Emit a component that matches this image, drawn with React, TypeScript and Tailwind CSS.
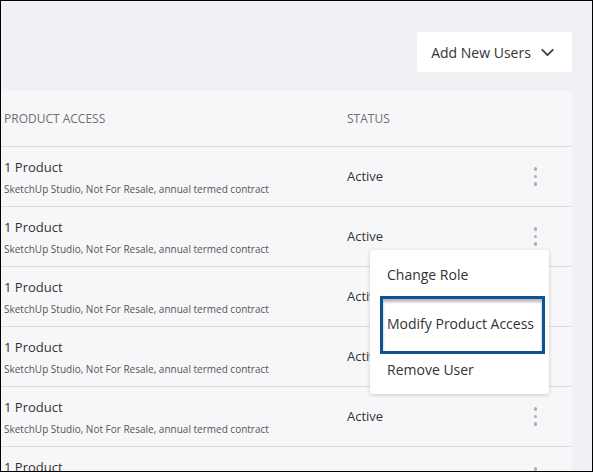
import { ChevronDown } from "lucide-react";

const rows = Array.from({ length: 6 }, () => ({
  product: "1 Product",
  detail: "SketchUp Studio, Not For Resale, annual termed contract",
  status: "Active",
}));

const Kebab = () => (
  <div className="flex flex-col items-center gap-[4px]">
    <span className="w-[3.5px] h-[3.5px] rounded-full bg-[#acacb2]" />
    <span className="w-[3.5px] h-[3.5px] rounded-full bg-[#acacb2]" />
    <span className="w-[3.5px] h-[3.5px] rounded-full bg-[#acacb2]" />
  </div>
);

export default function App() {
  return (
    <div
      className="w-[593px] h-[472px] border border-black bg-[#f1f0f5] overflow-hidden text-[#333]"
      style={{ fontFamily: '"Open Sans", "Noto Sans", sans-serif' }}
    >
      {/* toolbar */}
      <div className="flex justify-end pt-[31px] pr-[20px]">
        <button className="flex items-center gap-[6px] h-[40px] w-[155px] justify-center bg-white rounded-[3px] text-[14px] text-[#333]">
          Add New Users
          <ChevronDown size={21} strokeWidth={2.2} className="text-[#444]" />
        </button>
      </div>

      {/* table */}
      <div className="mt-[19px] mr-[20px] bg-[#f7f7f9]">
        <div className="flex items-center h-[55px] text-[12px] text-[#707070] uppercase">
          <div className="w-[346px] pl-[3px]">Product Access</div>
          <div>Status</div>
        </div>

        {rows.map((r, i) => (
          <div key={i} className="relative flex items-center h-[60px] border-t border-[#dcdcdf]">
            <div className="w-[346px] pl-[3px] flex flex-col">
              <span className="text-[13px] leading-[18px]">{r.product}</span>
              <span className="text-[10px] leading-[14px] mt-[6px] text-[#555]">{r.detail}</span>
            </div>
            <div className="flex-1 text-[13px]">{r.status}</div>
            <div className="w-[72px] flex justify-center pr-[1px]">
              <Kebab />
            </div>

            {i === 1 && (
              <div className="absolute z-10 top-[43px] right-[23px] w-[179px] bg-white rounded-[3px] shadow-[0_1px_4px_rgba(0,0,0,0.18)] pt-[6px] pb-[10px] text-[14px] text-[#333]">
                <div className="px-[17px] h-[36px] flex items-center">Change Role</div>
                <div className="ml-[10px] mr-[4px] mt-[4px] h-[58px] flex items-center pl-[4px] pb-[4px] border-[3px] border-[#0b5394] shadow-[inset_0_3px_3px_rgba(0,0,0,0.28)]">
                  Modify Product Access
                </div>
                <div className="px-[17px] h-[30px] flex items-center">Remove User</div>
              </div>
            )}
          </div>
        ))}
      </div>
    </div>
  );
}
